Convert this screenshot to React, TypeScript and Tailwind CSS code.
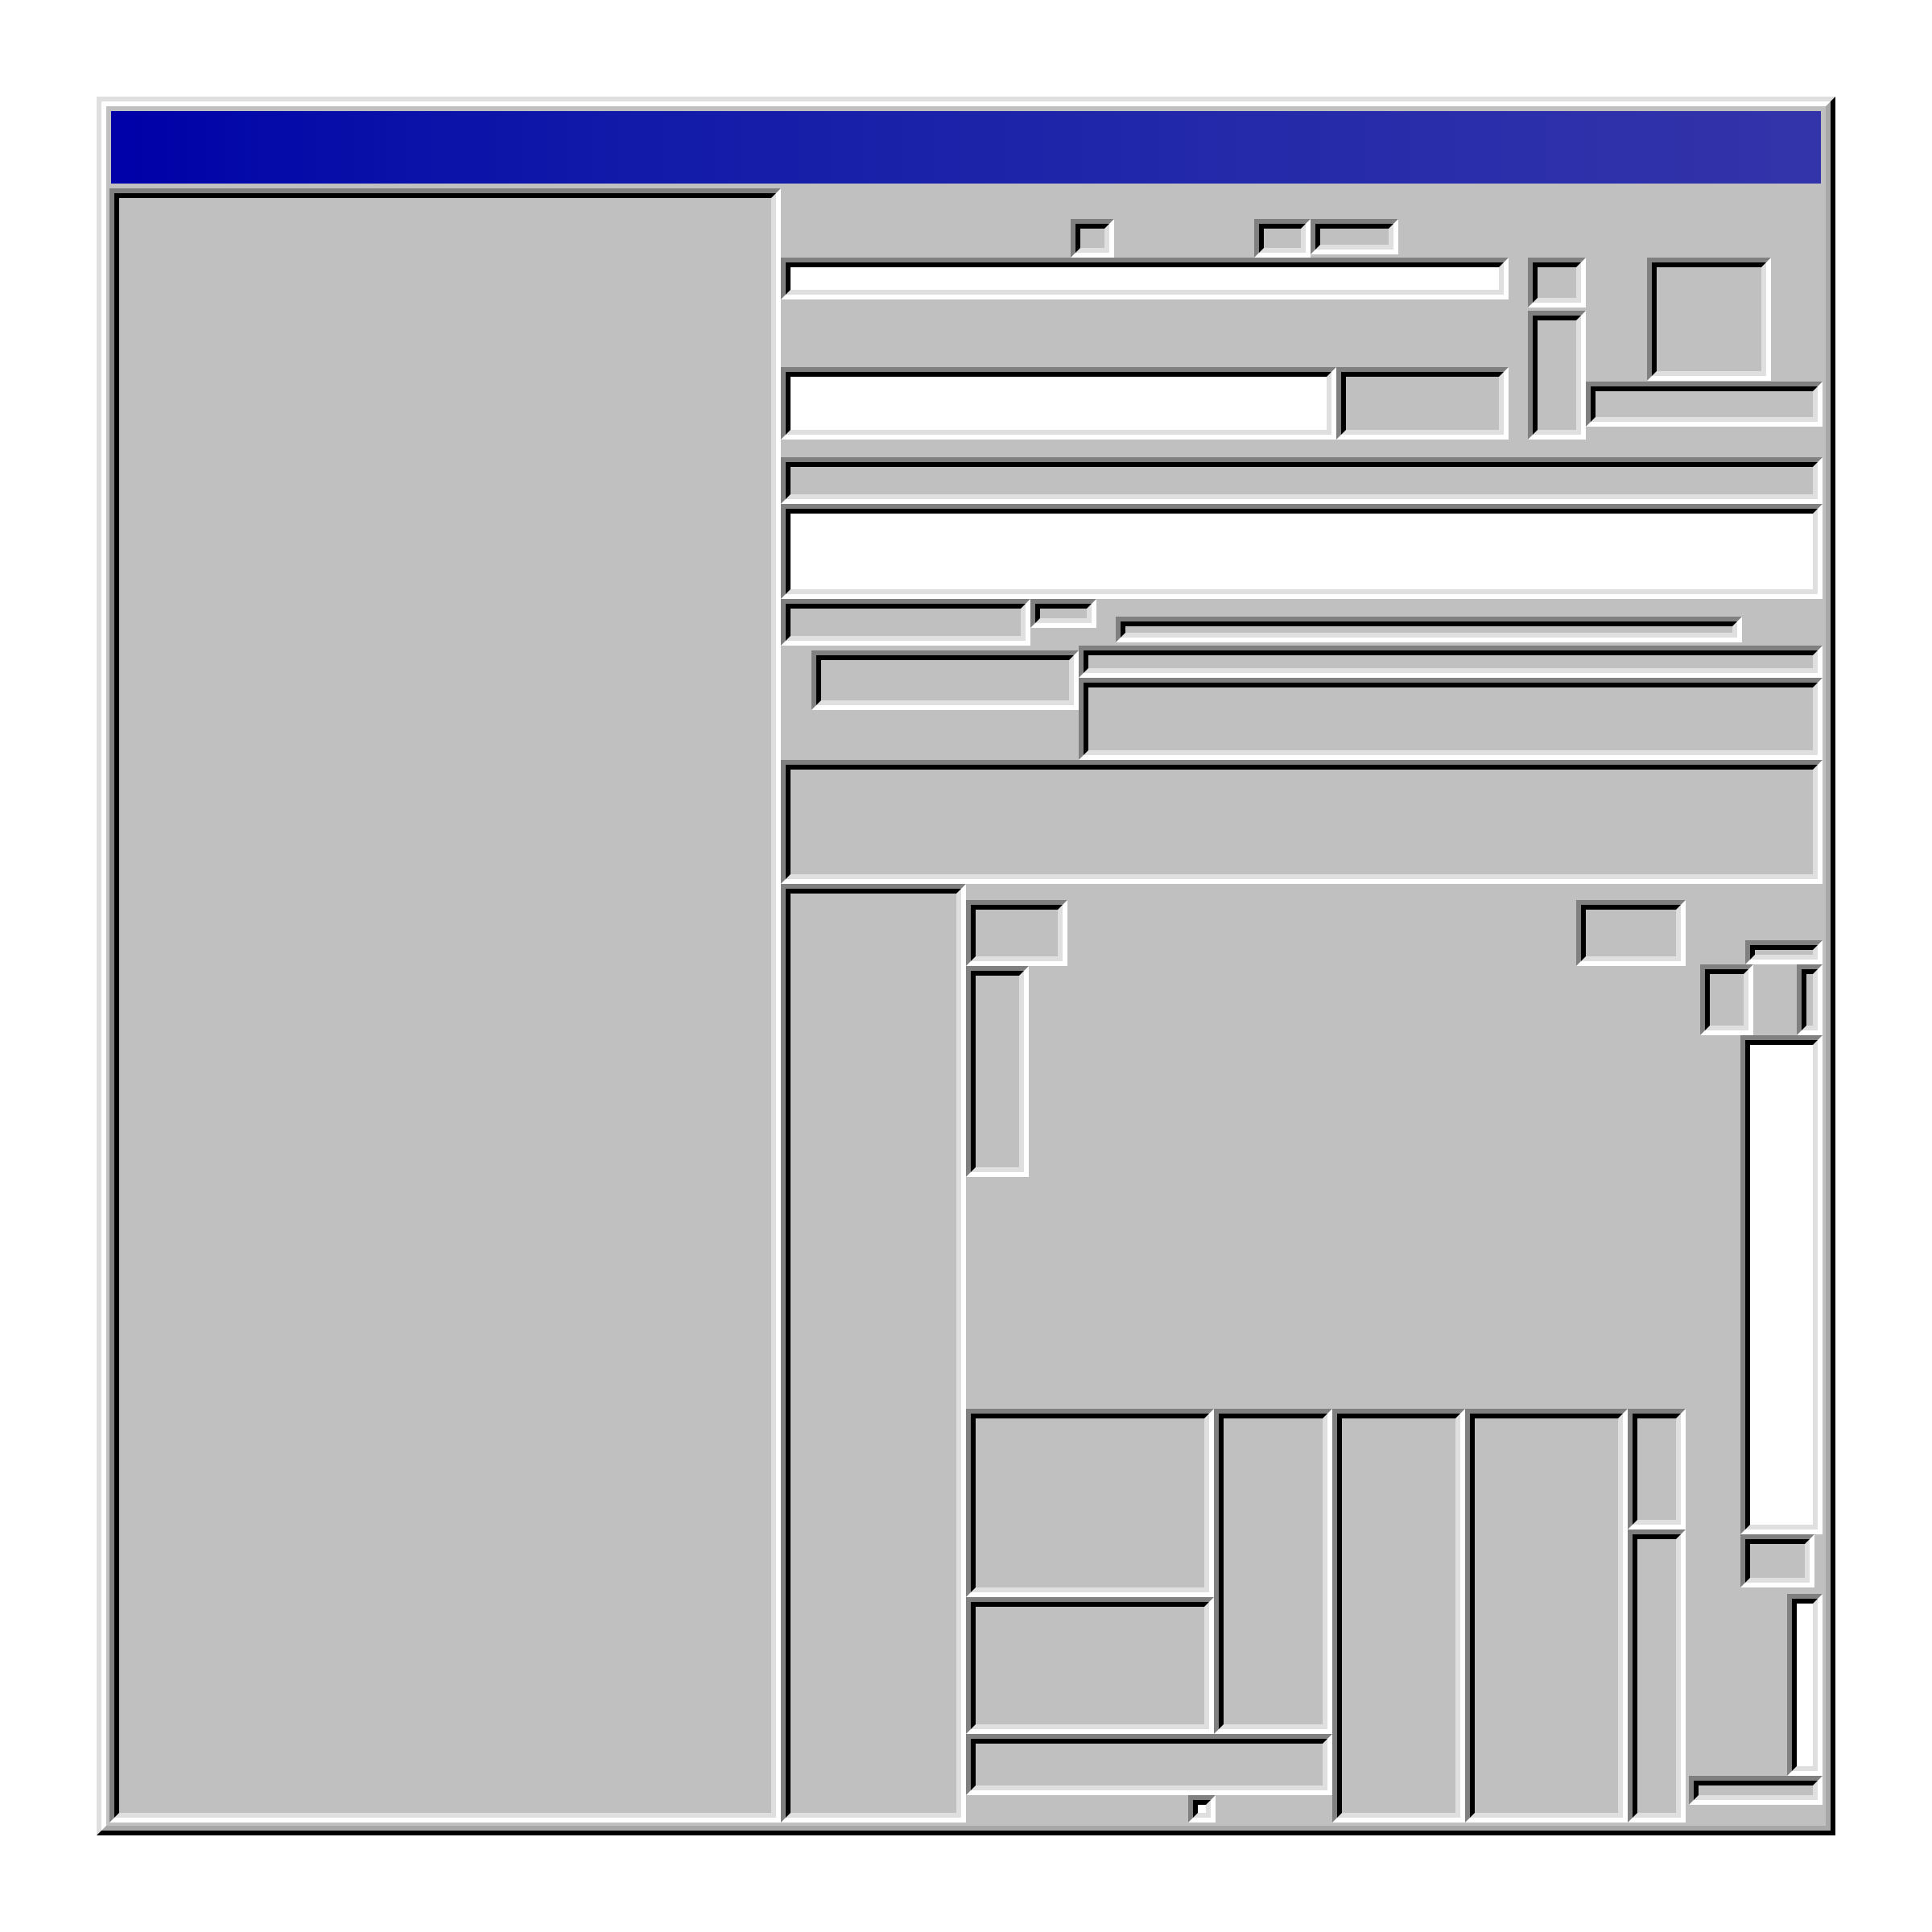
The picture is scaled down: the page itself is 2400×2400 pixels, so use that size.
import React from "react";

type SunkenProps = {
  className?: string;
  white?: boolean;
};

// Two-layer inset frame: grey/black on the top-left, light/white on the bottom-right.
function Sunken({ className = "", white = false }: SunkenProps) {
  return (
    <div
      className={`shrink-0 border-[6px] border-t-[#808080] border-l-[#808080] border-b-white border-r-white ${className}`}
    >
      <div
        className={`h-full w-full border-[6px] border-t-black border-l-black border-b-[#dfdfdf] border-r-[#dfdfdf] ${
          white ? "bg-white" : "bg-[#c0c0c0]"
        }`}
      />
    </div>
  );
}

function TopSection() {
  return (
    <div className="flex h-[312px] shrink-0">
      <div className="flex w-[904px] shrink-0 flex-col">
        <div className="flex h-[86px] items-start pt-[38px]">
          <Sunken className="ml-[360px] h-[48px] w-[54px]" />
          <Sunken className="ml-[174px] h-[48px] w-[70px]" />
          <Sunken className="h-[44px] w-[109px]" />
        </div>
        <Sunken white className="h-[52px] w-full" />
        <div className="h-[84px]" />
        <div className="flex h-[90px]">
          <Sunken white className="h-full w-[690px]" />
          <Sunken className="h-full w-[214px]" />
        </div>
      </div>
      <div className="flex w-[390px] shrink-0 pt-[86px]">
        <div className="ml-[24px] flex w-[72px] flex-col">
          <Sunken className="h-[62px] w-full" />
          <Sunken className="mt-[4px] h-[160px] w-full" />
        </div>
        <div className="flex w-[294px] flex-col">
          <Sunken className="ml-[76px] h-[153px] w-[154px]" />
          <Sunken className="mt-[1px] h-[56px] w-full" />
        </div>
      </div>
    </div>
  );
}

function MiddleSection() {
  return (
    <>
      <div className="h-[22px] shrink-0" />
      <Sunken className="h-[58px] w-full" />
      <Sunken white className="h-[118px] w-full" />
      <div className="flex h-[58px] shrink-0 items-start">
        <Sunken className="h-[58px] w-[310px]" />
        <Sunken className="h-[36px] w-[82px]" />
        <Sunken className="ml-[24px] mt-[22px] h-[32px] w-[778px]" />
      </div>
      <div className="flex h-[142px] shrink-0">
        <div className="w-[370px] shrink-0">
          <Sunken className="ml-[38px] mt-[6px] h-[74px] w-[332px]" />
        </div>
        <div className="flex w-[924px] flex-col">
          <Sunken className="h-[40px] w-full" />
          <Sunken className="h-[102px] w-full" />
        </div>
      </div>
      <Sunken className="h-[154px] w-full" />
    </>
  );
}

function LowerSection() {
  return (
    <div className="flex h-[1166px] shrink-0">
      <Sunken className="h-full w-[230px]" />

      <div className="flex w-[894px] shrink-0 flex-col">
        <div className="flex h-[652px] items-start justify-between">
          <div className="flex flex-col">
            <Sunken className="mt-[20px] h-[82px] w-[126px]" />
            <Sunken className="h-[262px] w-[78px]" />
          </div>
          <Sunken className="mt-[20px] h-[82px] w-[136px]" />
        </div>
        <div className="flex h-[514px]">
          <div className="flex w-[455px] shrink-0 flex-col">
            <div className="flex h-[404px]">
              <div className="flex w-[308px] flex-col">
                <Sunken className="h-[234px] w-full" />
                <Sunken className="h-[170px] w-full" />
              </div>
              <Sunken className="h-full w-[147px]" />
            </div>
            <Sunken className="h-[76px] w-full" />
            <Sunken white className="ml-[276px] h-[34px] w-[34px]" />
          </div>
          <Sunken className="h-full w-[165px]" />
          <Sunken className="h-full w-[202px]" />
          <div className="flex w-[72px] flex-col">
            <Sunken className="h-[150px] w-full" />
            <Sunken className="h-[364px] w-full" />
          </div>
        </div>
      </div>

      <div className="flex w-[170px] shrink-0 flex-col">
        <Sunken className="ml-[74px] mt-[70px] h-[30px] w-[96px]" />
        <div className="flex h-[88px] shrink-0">
          <Sunken className="ml-[18px] h-full w-[66px]" />
          <Sunken className="ml-[54px] h-full w-[32px]" />
        </div>
        <Sunken white className="ml-[68px] h-[620px] w-[102px]" />
        <Sunken className="ml-[68px] h-[66px] w-[92px]" />
        <Sunken white className="ml-[126px] mt-[8px] h-[226px] w-[44px]" />
        <Sunken className="ml-[4px] h-[36px] w-[166px]" />
      </div>
    </div>
  );
}

export default function App() {
  return (
    <div className="h-[2400px] w-[2400px] bg-white pl-[120px] pt-[120px]">
      <div className="h-[2160px] w-[2160px] border-[6px] border-t-[#dfdfdf] border-l-[#dfdfdf] border-b-black border-r-black">
        <div className="flex h-full w-full flex-col border-[6px] border-t-white border-l-white border-b-[#a8a8a8] border-r-[#a8a8a8] bg-[#c0c0c0] p-[4px]">
          <div className="mx-[2px] mt-[2px] h-[90px] shrink-0 bg-linear-to-r from-[#0000a8] to-[#3434aa]" />
          <div className="mt-[6px] flex h-[2030px] shrink-0">
            <Sunken className="h-full w-[834px]" />
            <div className="flex w-[1294px] shrink-0 flex-col">
              <TopSection />
              <MiddleSection />
              <LowerSection />
            </div>
          </div>
        </div>
      </div>
    </div>
  );
}
